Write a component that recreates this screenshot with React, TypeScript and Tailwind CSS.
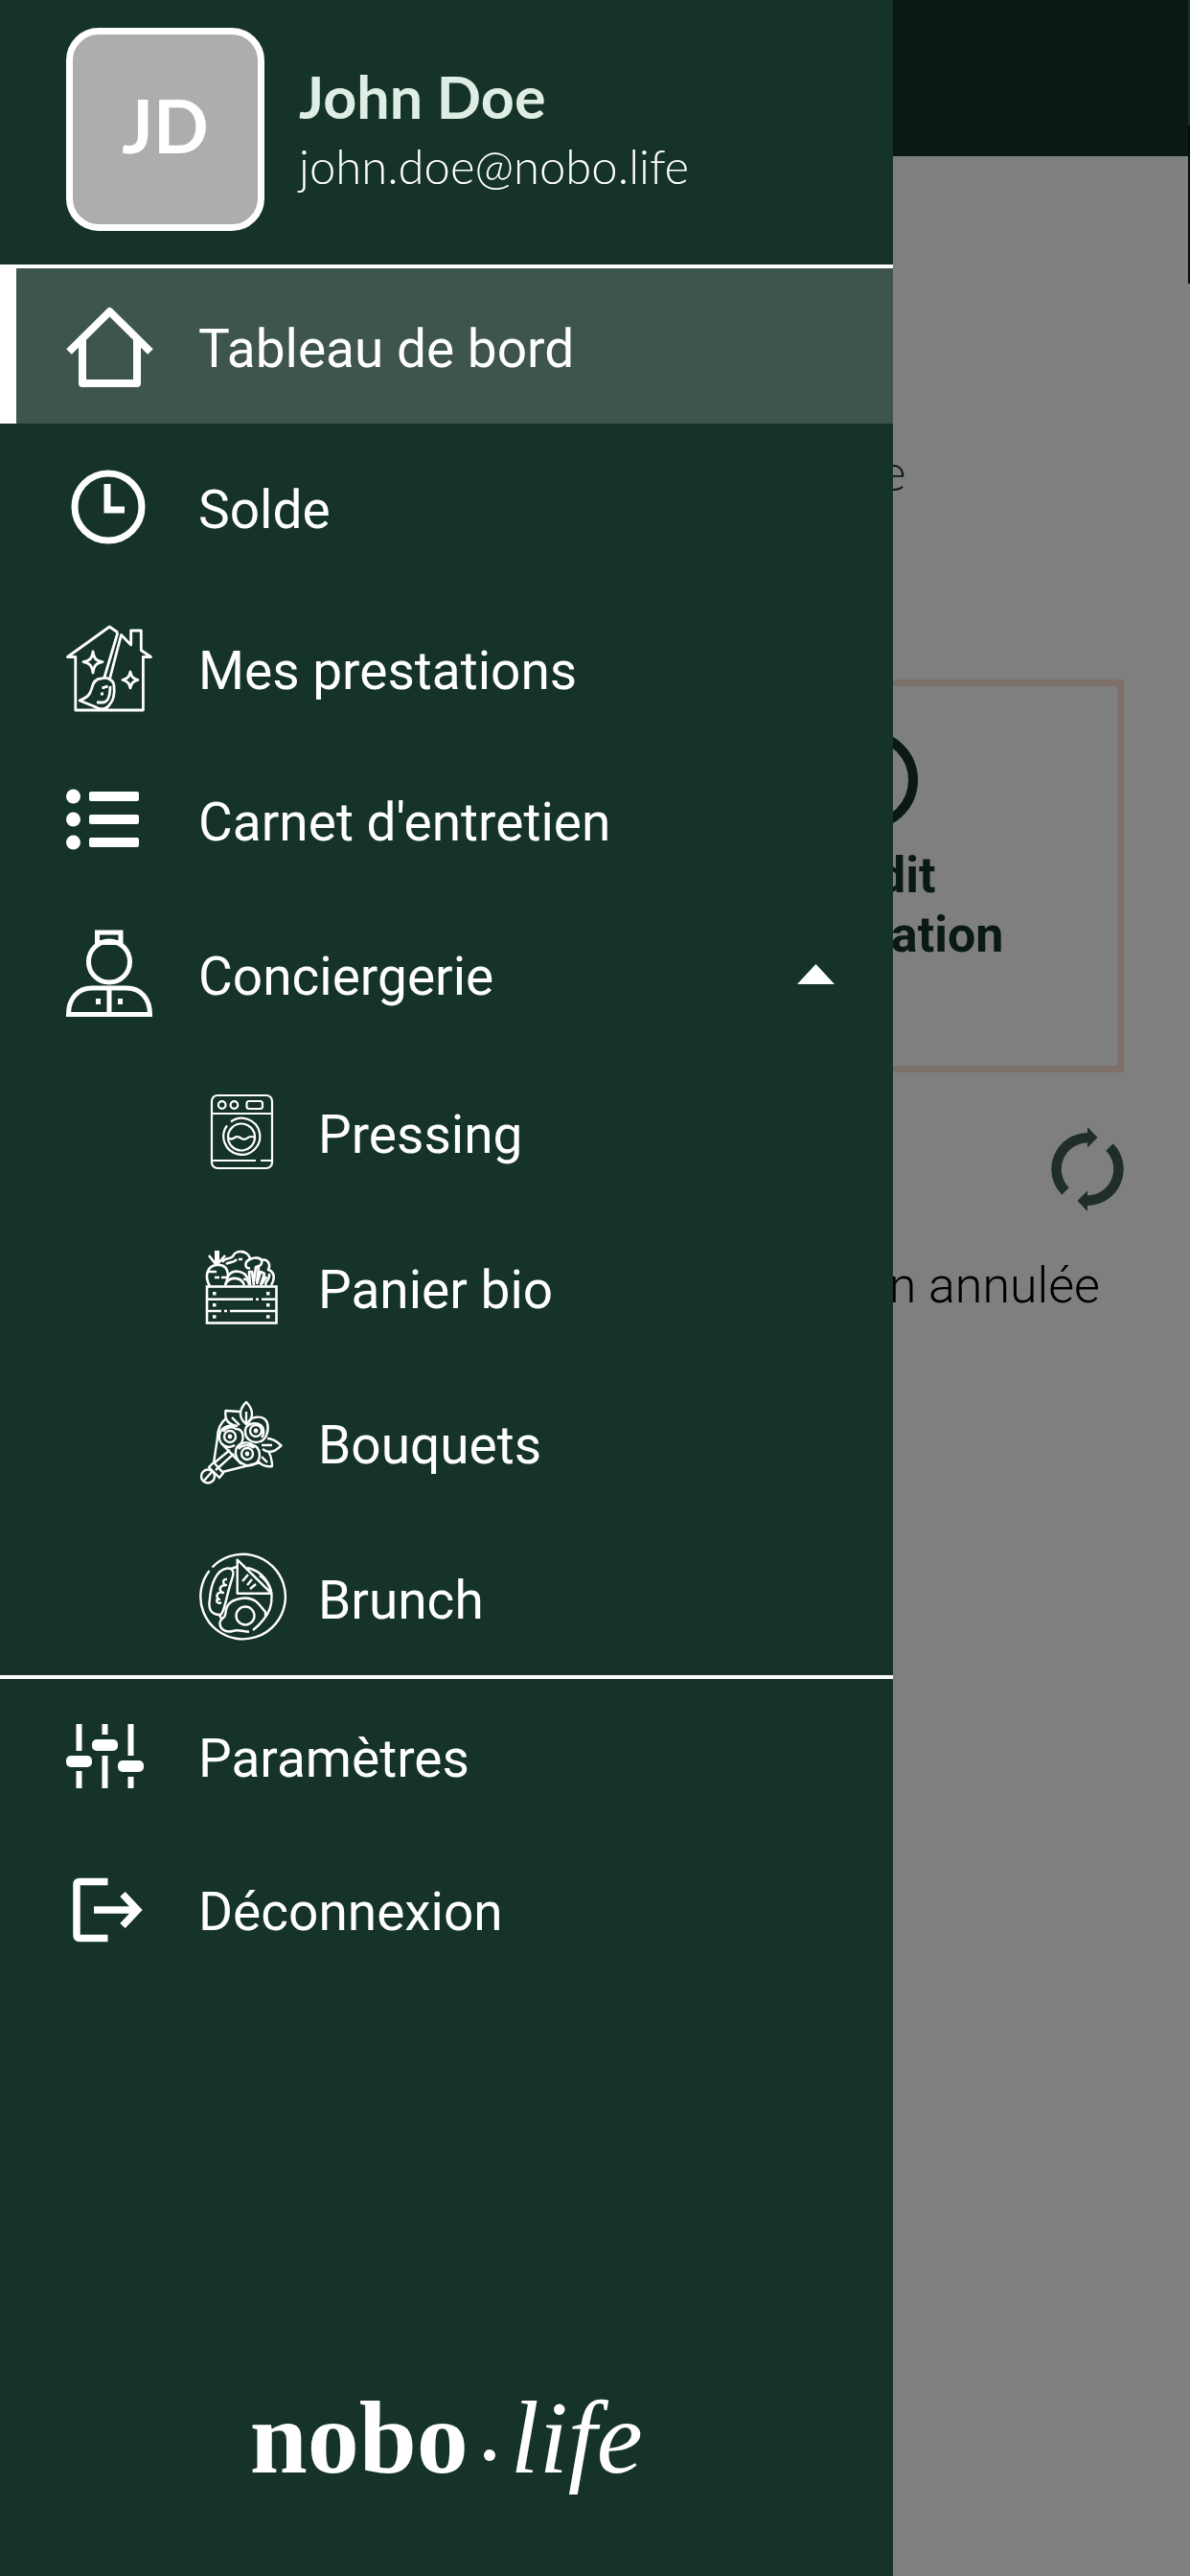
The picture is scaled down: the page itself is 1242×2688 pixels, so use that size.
import { useState } from "react";
import type { ReactNode } from "react";

function Icon({ children, width = 2.5 }: { children: ReactNode; width?: number }) {
  return (
    <svg
      viewBox="0 0 90 90"
      className="h-[90px] w-[90px] shrink-0 overflow-visible"
      fill="none"
      stroke="currentColor"
      strokeWidth={width}
      strokeLinejoin="round"
      aria-hidden="true"
    >
      {children}
    </svg>
  );
}

const HomeIcon = () => (
  <Icon width={8}>
    <path d="M3 51 L45.500 9 L88 51" />
    <path d="M17 38 V84 H74 V38" />
  </Icon>
);

const ClockIcon = () => (
  <Icon width={7}>
    <circle cx="44" cy="45" r="35" />
    <path d="M43 21 V48 H61" strokeLinejoin="miter" />
  </Icon>
);

const CleaningIcon = () => (
  <Icon width={2.8}>
    <path d="M53.900 8 L45.300 2 L1.500 33.500 H9.800 V89 H80.400 V33.500 H88.500 L78.300 26.500 V6 H67.700 V21 L57.500 10.500 L45.500 56.500" />
    <path d="M53.900 8 L39.600 56" />
    <path d="M37 56 C43 54 50 58 50 64 C51 72 49 80 44 85 C40 89 34 88 29 85 L14 79 C22 76 25 73 26.500 67 C28 60 32 56 37 56 Z" />
    <path d="M46 64 C46 72 44 80 39 81 H32" />
    <path d="M39 64 V67 M36 72 H39 M42 63 V66" strokeWidth="3" />
    <path d="M28 28 C29 35 31 37.500 38 38.700 C31 40 29 43 28 50 C27 43 25 40 18 38.700 C25 37.500 27 35 28 28 Z" />
    <path d="M67 49 C68 54 69.500 56 75 57.500 C69.500 59 68 61 67 66 C66 61 64.500 59 59 57.500 C64.500 56 66 54 67 49 Z" />
  </Icon>
);

const ListIcon = () => (
  <Icon>
    <g fill="currentColor" stroke="none">
      <circle cx="7.500" cy="21" r="7.500" />
      <circle cx="7.500" cy="45" r="7.500" />
      <circle cx="7.500" cy="69" r="7.500" />
      <rect x="24" y="16" width="52" height="10" rx="2" />
      <rect x="24" y="40" width="52" height="10" rx="2" />
      <rect x="24" y="64" width="52" height="10" rx="2" />
    </g>
  </Icon>
);

const ConciergeIcon = () => (
  <Icon width={5}>
    <path d="M32.500 14 V2 H57 V14" strokeLinejoin="miter" />
    <path d="M31 12.500 H59" />
    <circle cx="45" cy="32.500" r="21.500" />
    <path d="M2.500 87.500 C2.500 71 12 60 27 60 H63 C78 60 87.500 71 87.500 87.500 Z M45 60 V87" strokeLinejoin="miter" />
    <path d="M33.500 71 V77 M56.500 71 V77" />
  </Icon>
);

const WasherIcon = () => (
  <Icon width={2.2}>
    <rect x="14" y="7" width="63" height="76" rx="6" />
    <path d="M14 26 H77 M14 75 H60 M65 75 H77" />
    <circle cx="24.700" cy="17" r="3.800" />
    <circle cx="37.400" cy="17" r="3.800" />
    <rect x="50.500" y="13" width="16.500" height="8" rx="2.500" />
    <path d="M34 34.500 A19 19 0 1 1 30 38.500" />
    <circle cx="45" cy="50.500" r="14" />
    <path d="M31 51 Q34 54 38 51 Q41 49 45 52 Q49 54 52 51 Q55 49 59 51" />
  </Icon>
);

const BasketIcon = () => (
  <Icon width={2.6}>
    <rect x="9" y="44.500" width="72.500" height="38" strokeLinejoin="miter" />
    <path d="M9 57.700 H57 M60 57.700 H63 M66 57.700 H82 M9 70 H24 M27 70 H30 M33 70 H82" />
    <path d="M15 51.700 H18.500 M71 51.700 H74.500 M15 63.700 H18.500 M71 63.700 H74.500 M15 76 H18.500 M71 76 H74.500" strokeWidth="3.500" />
    <path d="M12 44 C6 34 9 23 19 22 C30 21 34 30 28 43" />
    <path d="M19.500 7 V22" strokeWidth="5" />
    <path d="M11 12 L18 21 M28 12 L21 20 M10 29 H19 M17 35 H22 M24 35 H30" />
    <path d="M25 19 C28 13 33 17 36 13 C39 5 53 7 54 16 C60 13 65 15 66 17 C72 15 76 21 73 27 C80 29 80 37 76 43" />
    <path d="M54 16 C47 19 49 27 54 25 M42 16 H46 M29 21 C32 18 36 21 40 16" />
    <path d="M66 17 C67 21 64 24 61 23 M31 34 C35 26 48 27 52 37" />
    <path d="M28 43 C31 34 44 33 48 43 M47 37 C50 36 53 39 53 43" />
    <path d="M54 43 L53 29 H56 L58 43 M58 39 L60 24 H63 L61 40 M61 42 L65 29 L69 31 L65 43 M66 42 L71 34 M70 43 C71 36 75 38 74 31" />
  </Icon>
);

const BouquetIcon = () => (
  <Icon width={2.4}>
    <path d="M50 3 C42 11 42 20 50 26 C58 20 58 11 50 3 Z M50 13 V26" />
    <path d="M43 13 L28.500 12 C27 22 32 27 41 28 M35 19 L43 27" />
    <path d="M72 41 C78 41 82 44 86.500 48.300 C80 55 73 57 67 52 M66 48 H77" />
    <path d="M73 54 C76 59 77 64 77 70 C70 71 64 68 62 64 M66 60 L72 66" />
    <circle cx="33" cy="39" r="6" />
    <circle cx="33" cy="39" r="1.200" />
    <path d="M38 48 C30 53 21 47 22 38 C23 29 33 25 39 31 C48 31 49 43 42 49 M26 34 C29 29 35 28 39 31" />
    <circle cx="60" cy="33" r="6" />
    <circle cx="60" cy="33" r="1.200" />
    <path d="M52 25 C55 17 69 16 72 25 C74 32 71 42 65 44 C57 47 48 42 49 32 C50 26 59 23 65 27 C69 30 69 37 66 40" />
    <circle cx="51" cy="57" r="6" />
    <circle cx="51" cy="57" r="1.200" />
    <path d="M46 67 C38 63 37 53 42 48 C48 44 54 45 57 48 C65 50 66 62 60 67 C55 70 50 70 46 67 M42 52 C46 47 54 47 58 51" />
    <path d="M29 20 C23 25 20 33 20 40 L16 67 M24 46 L45 68 M16 67 L33 53 M25 76 L65 66" />
    <path d="M16 66 L26 77 L22 82 L11 71 Z M18 74 L37 57" />
    <circle cx="10" cy="80.500" r="7" />
    <path d="M6 85 L14 76" />
  </Icon>
);

const BrunchIcon = () => (
  <Icon width={2.4}>
    <path d="M14.500 13.500 A44.300 44.300 0 1 1 11.500 17" />
    <path d="M40.700 5.500 V40.700 H76.300 Z" />
    <path d="M46 28 L52 21 M51 32 L56 26 M54 36 L60 31" />
    <path d="M51 14 C66 17 76 30 76.500 43 C77 52 74 61 68 68 C65 72 61 76 57 79" />
    <path d="M64 22 C70 26 74 32 75.500 38" />
    <path d="M23 63 C13 63 10 57 12 46 C13 31 19 16 30 14.500 C36 14 38 18 35 26 C30 40 27 62 23 63 Z" />
    <path d="M34 15 L40 13 M22 63 L24 67" />
    <path d="M30 26 C24 25 26 33 29 32 C23 32 20 37 26 40 C20 38 17 44 22 47 C17 45 19 53 24 50" />
    <path d="M53 80.700 C44 80 41 78 36 80 C27 82 22 77 22.500 71 C23 66 28 68 28.500 61 C29 50 38 46 49 45.500 C62 46 64 54 70 60 V64" />
    <circle cx="49" cy="64" r="9.500" />
  </Icon>
);

const SlidersIcon = () => (
  <Icon>
    <g fill="currentColor" stroke="none">
      <path d="M10.500 12 h6 v28 h-6 z M10.500 61 h6 v18 h-6 z M37.500 12 h6 v11 h-6 z M37.500 45 h6 v34 h-6 z M64.500 12 h6 v33 h-6 z M64.500 67 h6 v12 h-6 z" />
      <rect x="0" y="45" width="27" height="12" rx="5" />
      <rect x="27" y="28" width="27" height="12" rx="5" />
      <rect x="54" y="50" width="27" height="12" rx="5" />
    </g>
  </Icon>
);

const LogoutIcon = () => (
  <Icon width={7.5}>
    <path d="M43.500 16.500 H14 Q11 16.500 11 19.500 V72 Q11 75.500 14 75.500 H43.500" />
    <path d="M29 46 H74 M59 29.500 L74.500 46 L59 62.500" strokeLinejoin="miter" />
  </Icon>
);

const menu = [
  { label: "Tableau de bord", icon: <HomeIcon />, row: "h-[162px]" },
  { label: "Solde", icon: <ClockIcon />, row: "mt-1.5 h-[162px]" },
  { label: "Mes prestations", icon: <CleaningIcon />, row: "mt-1.5 h-[162px]" },
  { label: "Carnet d'entretien", icon: <ListIcon />, row: "h-[154px]" },
];

const services = [
  { label: "Pressing", icon: <WasherIcon /> },
  { label: "Panier bio", icon: <BasketIcon /> },
  { label: "Bouquets", icon: <BouquetIcon /> },
  { label: "Brunch", icon: <BrunchIcon /> },
];

const settings = [
  { label: "Paramètres", icon: <SlidersIcon /> },
  { label: "Déconnexion", icon: <LogoutIcon /> },
];

function Dashboard() {
  return (
    <main className="min-h-screen bg-white font-[Roboto,sans-serif] text-[52px]">
      <header className="h-[163px] bg-[#153328]" />
      <p className="mt-[299px] pr-[296px] text-right font-[Lato,sans-serif] text-[54px] leading-[60px] font-light text-[#153328]">
        Bienvenue
      </p>
      <section className="mt-[187px] mr-[69px] ml-auto flex h-[410px] w-[43%] flex-col items-center border-[7px] border-[#fae0d0] pt-[46px] text-center leading-[62px] font-bold text-[#153328]">
        <div className="h-[104px] w-[104px] rounded-full border-[10px] border-[#153328]" />
        <h2 className="mt-[17px]">
          Crédit
          <br />
          d'annulation
        </h2>
      </section>
      <div className="mt-[57px] flex justify-end pr-[69px]">
        <button type="button" aria-label="Actualiser" className="text-[#3e5c50]">
          <svg viewBox="0 0 76 88" className="h-[88px] w-[76px]" aria-hidden="true">
            <g fill="none" stroke="currentColor" strokeWidth="10.500">
              <path d="M15 67 A32.700 32.700 0 0 1 38 11.300" />
              <path d="M61 21 A32.700 32.700 0 0 1 38 76.700" />
            </g>
            <path d="M38 0 L48.500 11 L38 21.500 Z M38 66.500 L27.500 77 L38 88 Z" fill="currentColor" />
          </svg>
        </button>
      </div>
      <p className="mt-[48px] pr-[94px] text-right leading-[60px] font-light">
        Prestation annulée
      </p>
    </main>
  );
}

export default function App() {
  const [active, setActive] = useState("Tableau de bord");
  const [open, setOpen] = useState(true);

  return (
    <div className="relative min-h-screen overflow-hidden">
      <Dashboard />
      <div className="absolute inset-0 bg-black/50" />

      {/* edge of the closed right panel */}
      <div className="absolute top-0 right-0 w-0.5">
        <div className="h-[131px] bg-[#153328]" />
        <div className="h-[165px] bg-[#00100a]" />
      </div>

      <aside className="absolute inset-y-0 left-0 flex w-3/4 flex-col bg-[#153328] font-[Roboto,sans-serif] text-[55px] leading-[66px] text-white">
        <div className="flex h-[280px] shrink-0 gap-9 border-b-4 border-white pt-[29px] pl-[69px] font-[Lato,sans-serif]">
          <div className="flex h-[212px] w-[207px] items-center justify-center rounded-[34px] border-[7px] border-white bg-[#adadad] pb-2 text-[76px] font-bold">
            JD
          </div>
          <div className="pt-9">
            <p className="text-[61px] leading-[72px] font-bold text-[#deeee5]">John Doe</p>
            <p className="text-[49px] leading-[72px] font-light">john.doe@nobo.life</p>
          </div>
        </div>

        <nav className="border-b-4 border-white">
          {menu.map((item) => (
            <button
              key={item.label}
              type="button"
              onClick={() => setActive(item.label)}
              className={`flex w-full items-center gap-12 text-left ${item.row} ${
                active === item.label
                  ? "border-l-[17px] border-white bg-[#3e554c] pl-[52px]"
                  : "pl-[69px]"
              }`}
            >
              {item.icon}
              <span className="pt-1.5">{item.label}</span>
            </button>
          ))}
          <button
            type="button"
            aria-expanded={open}
            onClick={() => setOpen(!open)}
            className="flex h-[168px] w-full items-center gap-12 pr-[61px] pl-[69px] text-left"
          >
            <ConciergeIcon />
            <span className="flex-1 pt-1.5">Conciergerie</span>
            <svg
              viewBox="0 0 39 21"
              className={`h-[21px] w-[39px] ${open ? "" : "rotate-180"}`}
              fill="currentColor"
              aria-hidden="true"
            >
              <path d="M19.500 0 L39 21 H0 Z" />
            </svg>
          </button>
          {open &&
            services.map((item) => (
              <button
                key={item.label}
                type="button"
                className="flex h-[162px] w-full items-center gap-[35px] pl-[207px] text-left"
              >
                {item.icon}
                <span className="pt-1.5">{item.label}</span>
              </button>
            ))}
        </nav>

        {settings.map((item) => (
          <button
            key={item.label}
            type="button"
            className="flex h-40 w-full items-center gap-12 pl-[69px] text-left"
          >
            {item.icon}
            <span className="pt-1.5">{item.label}</span>
          </button>
        ))}

        <div className="mt-auto flex items-baseline justify-center pb-[84px] font-['Liberation_Serif',serif] text-[108px] leading-[120px]">
          <span className="font-bold">nobo</span>
          <span className="mx-4 h-3 w-3 -translate-y-3 rounded-full bg-white" />
          <span className="italic">life</span>
        </div>
      </aside>
    </div>
  );
}
